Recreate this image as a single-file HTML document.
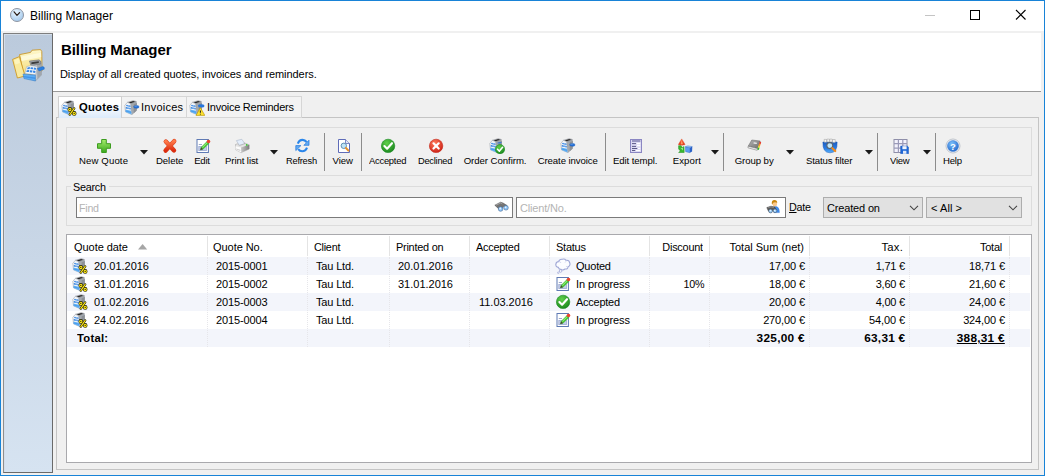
<!DOCTYPE html>
<html><head><meta charset="utf-8"><title>Billing Manager</title>
<style>
*{box-sizing:border-box;margin:0;padding:0}
html,body{width:1045px;height:476px;overflow:hidden;background:#f0f0f0}
body{position:relative;font-family:"Liberation Sans",sans-serif;font-size:11px;color:#000}
.abs{position:absolute;display:block}
.t{position:absolute;white-space:nowrap;line-height:13px;font-size:11px;font-family:"Liberation Sans",sans-serif}
</style></head>
<body>

<svg width="0" height="0" style="position:absolute">
<defs>
<linearGradient id="gGreen" x1="0" y1="0" x2="0" y2="1"><stop offset="0" stop-color="#a6ee6e"/><stop offset="1" stop-color="#3aa81c"/></linearGradient>
<linearGradient id="gRed" x1="0" y1="0" x2="0" y2="1"><stop offset="0" stop-color="#ff7a4a"/><stop offset="1" stop-color="#dc2c10"/></linearGradient>
<linearGradient id="gBlue" x1="0" y1="0" x2="0" y2="1"><stop offset="0" stop-color="#6db6f8"/><stop offset="1" stop-color="#1f74d8"/></linearGradient>
<linearGradient id="gGray" x1="0" y1="0" x2="0" y2="1"><stop offset="0" stop-color="#e6e6e6"/><stop offset="1" stop-color="#8e8e8e"/></linearGradient>
<radialGradient id="gOk" cx="0.4" cy="0.3" r="0.8"><stop offset="0" stop-color="#5fd04a"/><stop offset="1" stop-color="#14801a"/></radialGradient>
<radialGradient id="gNo" cx="0.4" cy="0.3" r="0.8"><stop offset="0" stop-color="#ff7a5a"/><stop offset="1" stop-color="#c81a10"/></radialGradient>
<radialGradient id="gHelp" cx="0.4" cy="0.3" r="0.8"><stop offset="0" stop-color="#7cc0fb"/><stop offset="1" stop-color="#1c62c8"/></radialGradient>
<radialGradient id="gClock" cx="0.4" cy="0.3" r="0.8"><stop offset="0" stop-color="#eaf6ff"/><stop offset="1" stop-color="#9cc4ea"/></radialGradient>
<linearGradient id="gFold" x1="0" y1="0" x2="0" y2="1"><stop offset="0" stop-color="#fef8cc"/><stop offset="1" stop-color="#f4da74"/></linearGradient>
<linearGradient id="gGrayD" x1="0" y1="0" x2="1" y2="0"><stop offset="0" stop-color="#c8c8c8"/><stop offset="1" stop-color="#7c7c7c"/></linearGradient>
<linearGradient id="gBook" x1="0" y1="0" x2="1" y2="1"><stop offset="0" stop-color="#b4b4b4"/><stop offset="1" stop-color="#6c6c6c"/></linearGradient>
<linearGradient id="gBlue2" x1="0" y1="0" x2="0" y2="1"><stop offset="0" stop-color="#1c5cc0"/><stop offset=".6" stop-color="#2a7ee6"/><stop offset="1" stop-color="#58b0f8"/></linearGradient>
<g id="reg">
  <path d="M6.4 3.6 L11.4 1.5 Q12.9 1.4 12.9 3 L12.7 10.6 L8.2 14.8 L7.3 14.3 Z" fill="#a4a9af"/>
  <path d="M9.6 4.2 L12.8 3 L12.7 10.6 L9.8 13.2Z" fill="#8c9197"/>
  <path d="M3.4 2.3 L9.2 0.7 L12.4 1.5 L6.6 3.7 Z" fill="#c4c8cc" stroke="#7a7f86" stroke-width=".5"/>
  <path d="M4.6 2.4 L9.2 1.1 L11.2 1.8 L6.7 3.3Z" fill="#2a2a2a"/>
  <path d="M0.8 5.3 L3.4 2.3 L6.6 3.7 L7.7 14.5 L1.5 11.9 Z" fill="#f4f6f9" stroke="#8a9098" stroke-width=".45" stroke-linejoin="round"/>
  <path d="M2.5 4.7 L6.4 5.5 L6.5 6.9 L2.1 6Z" fill="#2f80e0"/>
  <path d="M1.8 7.1 L6.6 8 L6.8 9.4 L1.7 8.4Z" fill="#2f80e0"/>
  <path d="M3.6 5.5 L5.6 5.9 M3.2 7.9 L5.6 8.4" stroke="#cfe6ff" stroke-width=".6"/>
  <path d="M1.4 9.6 L7 10.8 L7.6 14.4 L1.6 11.9Z" fill="#62b2f5"/>
  <path d="M1.5 10.6 L7.2 12 L7.3 12.8 L1.5 11.3Z" fill="#2f80e0" opacity=".55"/>
</g>
</defs></svg>

<div class="abs" style="left:0px;top:0px;width:1045px;height:476px;background:#f0f0f0;border:1px solid #1883d7"></div>
<div class="abs" style="left:1px;top:1px;width:1043px;height:30px;background:#fff"></div>
<svg class="abs" style="left:8.8px;top:6.7px" width="16" height="16" viewBox="0 0 16 16"><circle cx="8" cy="8" r="6.5" fill="url(#gClock)" stroke="#9096a2" stroke-width="1"/><path d="M5.1 4.8 L8 8.4 L10.6 5.7" fill="none" stroke="#2a1c14" stroke-width="1.2" stroke-linecap="round" stroke-linejoin="round"/></svg>
<span id="t1" class="t " style="left:30px;top:9px;font-size:12px;line-height:15px;;letter-spacing:0.020px">Billing Manager</span>
<div class="abs" style="left:925px;top:15px;width:10px;height:1px;background:#c4c4c4"></div>
<div class="abs" style="left:970px;top:10px;width:10px;height:10px;border:1px solid #000"></div>
<svg class="abs" style="left:1015px;top:9px" width="12" height="12" viewBox="0 0 12 12"><path d="M1 1 L10.5 10.5 M10.5 1 L1 10.5" stroke="#000" stroke-width="1.1" fill="none"/></svg>
<div class="abs" style="left:3px;top:33px;width:50px;height:440px;background:linear-gradient(#bbcadc,#d6e3f1);border:1px solid #6a6a6a;border-top-color:#7e7e7e;border-left-color:#8e8e8e;box-shadow:inset 1px 1px 0 #d3dde9"></div>
<svg class="abs" style="left:11.5px;top:48.5px" width="33" height="33" viewBox="0 0 33 33"><path d="M7.5 5.6 L18.6 3.4 L20 1.2 L28.6 0.6 L29.8 2.6 L30 22 L12 27.6Z" fill="url(#gFold)" stroke="#c8962a" stroke-width=".9" stroke-linejoin="round"/><path d="M9 7.4 L29 3.8 L29.2 8 L9.8 12Z" fill="#fffce6" opacity=".75"/><path d="M0.6 10.4 L7.4 7.6 L13 27 L5.4 29 Z" fill="#f9ea9e" stroke="#cf9a24" stroke-width=".9" stroke-linejoin="round"/><path d="M2.2 11.2 L6.6 9.4 L8 14 L3.6 15.6Z" fill="#fdf6c4" opacity=".8"/><path d="M19.4 12.6 L27.6 11.8 Q29.4 11.8 29.4 14 L29.4 26 L23.4 32 L20.4 30.6 Z" fill="#c3c8ce" stroke="#858b93" stroke-width=".5"/><path d="M25 16 L29.4 14.6 L29.4 26 L25.4 30Z" fill="#a0a6ad"/><path d="M17.4 12 L27 10.8 L28.6 12.2 L28.6 15 L19 16.8 Z" fill="#9a9ea4" stroke="#666" stroke-width=".5"/><path d="M19.4 13.2 L26.8 12.2 L26.8 14 L19.4 15.2Z" fill="#3c3c3c"/><path d="M14.6 17.6 L19 16.6 L25.4 17.6 L23.6 25.8 L12.8 24.6 Z" fill="#f2f5f8" stroke="#98a0a8" stroke-width=".5"/><g fill="#3486e6"><path d="M15.6 18.4l2.4-.3-.4 1.9-2.5.2z"/><path d="M18.8 18.2l2.4.2-.4 1.9-2.4-.2z"/><path d="M22 18.6l2.2.3-.4 1.9-2.2-.3z"/><path d="M14.8 21.2l2.5-.1-.4 2-2.6 0z"/><path d="M18.1 21.2l2.4.2-.4 2-2.4-.2z"/><path d="M21.3 21.6l2.2.3-.4 2-2.2-.3z"/></g><path d="M11 25 L23.4 26.2 L23.4 32 L12 29.6 Z" fill="#5eaef4" stroke="#2c78c8" stroke-width=".5"/><path d="M11.6 27 L23.4 28.6 L23.4 30 L11.8 28.2Z" fill="#2f80e0" opacity=".6"/><path d="M25.4 19.4 L30.6 17.6 Q33 17.8 32.2 20.2 L27 22Z" fill="#2b7fe0" stroke="#1a5fb8" stroke-width=".4"/></svg>
<div class="abs" style="left:53px;top:33px;width:988px;height:59px;background:#fff;border-bottom:1px solid #9a9a9a"></div>
<span id="t2" class="t " style="left:61px;top:41px;font-size:15px;line-height:17px;font-weight:bold;letter-spacing:-0.085px">Billing Manager</span>
<span id="t3" class="t " style="left:60px;top:68px;line-height:13px;letter-spacing:-0.071px">Display of all created quotes, invoices and reminders.</span>
<div class="abs" style="left:56px;top:117px;width:983px;height:353px;border:1px solid #c4c4c4;background:#f0f0f0"></div>
<div class="abs" style="left:121px;top:96px;width:66px;height:22px;border:1px solid #d6d6d6;border-left:none;background:#f3f3f3"></div>
<div class="abs" style="left:186px;top:96px;width:116px;height:22px;border:1px solid #d6d6d6;background:#f3f3f3"></div>
<div class="abs" style="left:58px;top:96px;width:64px;height:22px;border:1px solid #d0d0d0;border-bottom:none;background:linear-gradient(#ffffff 30%,#dcebfb)"></div>
<svg class="abs" style="left:61px;top:100px" width="16" height="16" viewBox="0 0 16 16"><use href="#reg"/><g stroke="#1d1d00" stroke-width="2.3" fill="none" stroke-linecap="round"><circle cx="8.8" cy="9.4" r="1.15"/><circle cx="13.2" cy="13.4" r="1.15"/><path d="M13.2 8.4 L8.8 14.6"/></g><g stroke="#ffe818" stroke-width="1.15" fill="none" stroke-linecap="round"><circle cx="8.8" cy="9.4" r="1.15"/><circle cx="13.2" cy="13.4" r="1.15"/><path d="M13.2 8.4 L8.8 14.6"/></g></svg>
<span id="t4" class="t " style="left:79px;top:101px;font-weight:bold;letter-spacing:0.250px;transform:scaleX(1.0215);transform-origin:0 0">Quotes</span>
<svg class="abs" style="left:124px;top:100px" width="16" height="16" viewBox="0 0 16 16"><use href="#reg"/><path d="M9.6 6.2 L12.4 5.4 Q15.2 5.2 15 7 Q14.8 8.5 12.6 8.3 L10 7.8Z" fill="#2470d8" stroke="#1a58b0" stroke-width=".4"/><path d="M10.6 6.4 L13.2 5.9" stroke="#7fb6f6" stroke-width=".6"/></svg>
<span id="t5" class="t " style="left:141px;top:101px;;letter-spacing:0.234px">Invoices</span>
<svg class="abs" style="left:189px;top:100px" width="16" height="16" viewBox="0 0 16 16"><use href="#reg"/><path d="M9 5 L12.2 4.2 Q15.6 4 15.4 6.2 Q15.2 7.8 12.4 7.6 L9.4 7Z" fill="#2876dc"/><path d="M11.4 7.6 L15.8 15.4 L7 15.4Z" fill="#ffe32e" stroke="#b08c00" stroke-width=".6" stroke-linejoin="round"/><path d="M11.4 10.4 V12.8 M11.4 13.7 V14.5" stroke="#222" stroke-width="1.1"/></svg>
<span id="t6" class="t " style="left:207px;top:101px;;letter-spacing:-0.250px;transform:scaleX(0.9989);transform-origin:0 0">Invoice Reminders</span>
<div class="abs" style="left:66px;top:127px;width:966px;height:49px;border:1px solid #dcdcdc;background:#f0f0f0"></div>
<svg class="abs" style="left:96px;top:138px" width="16" height="16" viewBox="0 0 16 16"><path d="M5.7 1.5h4.6v4.2h4.2v4.6h-4.2v4.2H5.7v-4.2H1.5V5.7h4.2z" fill="url(#gGreen)" stroke="#3c9c1e" stroke-width="1" stroke-linejoin="round"/></svg>
<span id="t7" class="t " style="left:79.0px;top:155px;font-size:9.6px;line-height:12px;;letter-spacing:0.125px">New Quote</span>
<svg class="abs" style="left:162px;top:138px" width="16" height="16" viewBox="0 0 16 16"><g fill="none" stroke-linecap="round"><path d="M3.8 3.6 L12 12.4 M12.2 3.2 L3.6 12.6" stroke="#d63c18" stroke-width="4.4"/><path d="M3.8 3.6 L12 12.4" stroke="url(#gRed)" stroke-width="3.5"/><path d="M12.2 3.2 L3.6 12.6" stroke="url(#gRed)" stroke-width="3.5"/></g></svg>
<span id="t8" class="t " style="left:156.0px;top:155px;font-size:9.6px;line-height:12px;;letter-spacing:-0.087px">Delete</span>
<svg class="abs" style="left:194.5px;top:138px" width="16" height="16" viewBox="0 0 16 16"><rect x="2" y="1.5" width="11.4" height="13" fill="#fff" stroke="#5f7ab4"/><path d="M3.8 6.5h3.2" stroke="#9aa8cc" stroke-width="1"/><rect x="3.8" y="8.3" width="7.8" height="4.4" fill="#c3cdea" stroke="#8d9cc8" stroke-width=".6"/><path d="M5.3 12 L6.2 9.3 L12 3.4 L14 5.4 L8 11.2 Z" fill="#4ccc38" stroke="#2f9a22" stroke-width=".4" stroke-linejoin="round"/><path d="M7.2 9.6 L12.2 4.6" stroke="#a4f08c" stroke-width=".9"/><circle cx="13.5" cy="3.5" r="1.8" fill="#e8442e"/><path d="M5.3 12 L6.2 9.3 L8 11.2Z" fill="#4a4036"/></svg>
<span id="t9" class="t " style="left:194.2px;top:155px;font-size:9.6px;line-height:12px;;letter-spacing:-0.249px">Edit</span>
<svg class="abs" style="left:235px;top:138px" width="16" height="16" viewBox="0 0 16 16"><g transform="translate(0 .8)"><path d="M1.4 1.8 L6.8 0.5 L9.8 4.8 L4.4 6.6Z" fill="#e3edfb" stroke="#a9b6c8" stroke-width=".6" stroke-linejoin="round"/><path d="M0.3 5.8 L2.4 5 L4.4 6.8 L9.8 5 L9.2 4 L14.2 6 L14.2 10.2 L6.2 13.8 L0.5 10.8Z" fill="#e4e4e4" stroke="#9a9a9a" stroke-width=".5" stroke-linejoin="round"/><path d="M6 8.8 L14.2 6 L14.2 10.2 L6.2 13.8Z" fill="url(#gGrayD)"/><path d="M0.5 7.4 L6 8.8 L6.2 13.8 L0.5 10.8Z" fill="#fbfbfb"/><path d="M1.2 9.6 L5.4 11 L5.4 12.2 L1.2 10.6Z" fill="#cfcfcf"/><circle cx="11.7" cy="6.1" r=".95" fill="#35c72c"/></g></svg>
<span id="t10" class="t " style="left:225.0px;top:155px;font-size:9.6px;line-height:12px;;letter-spacing:-0.092px">Print list</span>
<svg class="abs" style="left:294.5px;top:138px" width="16" height="16" viewBox="0 0 16 16"><path d="M2.8 5.6 Q4.2 1.9 7.6 1.9 Q10 1.9 11.6 4" fill="none" stroke="#2a86ea" stroke-width="2.1"/><path d="M14 2.2 V7.3 H8.9Z" fill="#62acf6" stroke="#1f74d8" stroke-width=".7" stroke-linejoin="round"/><path d="M12 9.6 Q10.6 13.3 7.2 13.3 Q4.8 13.3 3.2 11.2" fill="none" stroke="#2a86ea" stroke-width="2.1"/><path d="M0.8 12.6 V7.6 H5.9Z" fill="#62acf6" stroke="#1f74d8" stroke-width=".7" stroke-linejoin="round"/></svg>
<span id="t11" class="t " style="left:285.9px;top:155px;font-size:9.6px;line-height:12px;;letter-spacing:-0.250px;transform:scaleX(0.9690);transform-origin:0 0">Refresh</span>
<svg class="abs" style="left:335.5px;top:138px" width="16" height="16" viewBox="0 0 16 16"><path d="M2.5 1.5 H9.5 L13.5 5.5 V14.5 H2.5Z" fill="#fff" stroke="#5f6cb8"/><path d="M9.5 1.5 V5.5 H13.5" fill="#dfe6f6" stroke="#5f6cb8" stroke-width=".8"/><circle cx="7.8" cy="7.8" r="2.7" fill="#bfe4f6" stroke="#5f8fb4" stroke-width="1"/><path d="M10 10 L12.4 12.6" stroke="#e8902a" stroke-width="2" stroke-linecap="round"/></svg>
<span id="t12" class="t " style="left:332.5px;top:155px;font-size:9.6px;line-height:12px;;letter-spacing:-0.042px">View</span>
<svg class="abs" style="left:380px;top:138px" width="16" height="16" viewBox="0 0 16 16"><circle cx="8.1" cy="7.9" r="6.7" fill="url(#gOk)" stroke="#168a1e" stroke-width=".6"/><path d="M4.4 8.1 L7.1 10.7 L12 5.2" fill="none" stroke="#fff" stroke-width="2.1" stroke-linecap="round" stroke-linejoin="round"/></svg>
<span id="t13" class="t " style="left:368.9px;top:155px;font-size:9.6px;line-height:12px;;letter-spacing:-0.250px;transform:scaleX(0.9774);transform-origin:0 0">Accepted</span>
<svg class="abs" style="left:428px;top:138px" width="16" height="16" viewBox="0 0 16 16"><circle cx="8.1" cy="7.9" r="6.7" fill="url(#gNo)" stroke="#c42414" stroke-width=".6"/><path d="M5.5 5.3 L10.7 10.5 M10.7 5.3 L5.5 10.5" stroke="#fff" stroke-width="2.2" stroke-linecap="round"/></svg>
<span id="t14" class="t " style="left:418.1px;top:155px;font-size:9.6px;line-height:12px;;letter-spacing:-0.250px;transform:scaleX(0.9665);transform-origin:0 0">Declined</span>
<svg class="abs" style="left:488.5px;top:138px" width="16" height="16" viewBox="0 0 16 16"><use href="#reg"/><path d="M8.6 5 L12.4 4.6" stroke="#2876dc" stroke-width="1"/><circle cx="11" cy="11.2" r="4.7" fill="url(#gOk)" stroke="#168a1e" stroke-width=".5"/><path d="M8.5 11.2 L10.4 13.1 L13.6 9.3" fill="none" stroke="#fff" stroke-width="1.6" stroke-linecap="round" stroke-linejoin="round"/></svg>
<span id="t15" class="t " style="left:463.7px;top:155px;font-size:9.6px;line-height:12px;;letter-spacing:-0.049px">Order Confirm.</span>
<svg class="abs" style="left:560px;top:138px" width="16" height="16" viewBox="0 0 16 16"><use href="#reg"/><path d="M9.6 6.2 L12.4 5.4 Q15.2 5.2 15 7 Q14.8 8.5 12.6 8.3 L10 7.8Z" fill="#2470d8" stroke="#1a58b0" stroke-width=".4"/><path d="M10.6 6.4 L13.2 5.9" stroke="#7fb6f6" stroke-width=".6"/></svg>
<span id="t16" class="t " style="left:537.7px;top:155px;font-size:9.6px;line-height:12px;;letter-spacing:-0.094px">Create invoice</span>
<svg class="abs" style="left:628px;top:138px" width="16" height="16" viewBox="0 0 16 16"><rect x="2.5" y="1.5" width="11" height="13" fill="#dcdaf3" stroke="#8a86c2"/><path d="M4 3h8.4" stroke="#6c6aa0" stroke-width="1.2"/><path d="M4 5.6h4M4 8.4h4M4 10.5h5.2M4 12.5h3.2" stroke="#5c5a88" stroke-width="1"/><path d="M8.8 5.6h3.4M9 7.6h3.2M10 10.5h2.2M8 12.5h4.2" stroke="#fff" stroke-width="1.2"/></svg>
<span id="t17" class="t " style="left:613.0px;top:155px;font-size:9.6px;line-height:12px;;letter-spacing:-0.093px">Edit templ.</span>
<svg class="abs" style="left:678px;top:138px" width="16" height="16" viewBox="0 0 16 16"><path d="M3.7 0.9 L7.1 6.6 Q3.7 8 0.3 6.6Z" fill="url(#gRed)" stroke="#d8401c" stroke-width=".4" stroke-linejoin="round"/><path d="M3.6 2.2 L5 6.2 L2.6 6.4Z" fill="#ffb07a" opacity=".8"/><path d="M0.6 7.7 L3 7.7 L4.6 9.7 L6 8.4 L6.2 14.5 L0.6 14.5 L2.3 12.9 L0.6 10.9Z" fill="#37b82e" stroke="#1f8e1c" stroke-width=".5" stroke-linejoin="round"/><path d="M2.6 10 L5 12.6 L5 10Z" fill="#9be88a"/><path d="M7.4 8.7 L12 9.5 L11.8 14.7 L7.6 13.7Z" fill="#5a9cf0" stroke="#2a62c0" stroke-width=".4"/><path d="M12 9.5 L14.3 8.6 L14.1 13.4 L11.8 14.7Z" fill="#2a62c8"/><path d="M7.4 8.7 L9.8 7.7 L14.3 8.6 L12 9.5Z" fill="#9cc6fa" stroke="#2a62c0" stroke-width=".3"/></svg>
<span id="t18" class="t " style="left:672.7px;top:155px;font-size:9.6px;line-height:12px;;letter-spacing:0.113px">Export</span>
<svg class="abs" style="left:747px;top:138px" width="16" height="16" viewBox="0 0 16 16"><path d="M4.8 2 L13.2 3 L10.4 10.6 L1.2 8.2Z" fill="url(#gBook)" stroke="#5e5e5e" stroke-width=".5" stroke-linejoin="round"/><path d="M1.2 8.2 L10.4 10.6 L10.2 12.3 L0.9 9.8Z" fill="#f2f2f2" stroke="#6a6a6a" stroke-width=".5" stroke-linejoin="round"/><path d="M6.8 4.2 L10 4.7 L9.6 6 L6.4 5.5Z" fill="#f0f0f0"/><path d="M12.8 3.6 L14.2 4.2 L13.6 6.2 L12.1 5.8Z" fill="#e8392a"/><path d="M12.1 5.8 L13.6 6.2 L13 8.1 L11.5 7.7Z" fill="#f59a1c"/><path d="M11.5 7.7 L13 8.1 L12.4 10 L10.9 9.6Z" fill="#f0d820"/><path d="M10.9 9.6 L12.4 10 L11.8 12 L10.3 11.6Z" fill="#2fb52a"/></svg>
<span id="t19" class="t " style="left:734.7px;top:155px;font-size:9.6px;line-height:12px;;letter-spacing:-0.067px">Group by</span>
<svg class="abs" style="left:821.5px;top:138px" width="16" height="16" viewBox="0 0 16 16"><path d="M0.9 4 Q0.4 14.8 8 14.8 Q15.6 14.8 15.1 4Z" fill="url(#gBlue2)" stroke="#1a58b8" stroke-width=".5"/><path d="M2.2 1.4h2.4v2.8H2.2zM5 1.1h2.4v2.8H5zM7.8 1.1h2.4v2.8H7.8zM10.6 1.5h2.6v3h-2.6z" fill="#f8f8f8" stroke="#9a9a9a" stroke-width=".5"/><circle cx="7.8" cy="7.6" r="3" fill="#bfe6fa" stroke="#5a6470" stroke-width="1.1"/><path d="M10.4 10.2 L13.2 13" stroke="#f08a1e" stroke-width="2.3" stroke-linecap="round"/></svg>
<span id="t20" class="t " style="left:806.0px;top:155px;font-size:9.6px;line-height:12px;;letter-spacing:-0.133px">Status filter</span>
<svg class="abs" style="left:892.5px;top:138px" width="16" height="16" viewBox="0 0 16 16"><rect x="1" y="1.5" width="13" height="13" fill="#f3f2fc" stroke="#8e8ea8"/><path d="M1 5.7H14M1 10.1H14M5.4 1.5V14.5M9.8 1.5V14.5" stroke="#9a9ab8" stroke-width="1.2"/><path d="M7.6 8 H14.2 L15.6 9.2 V15.8 H7.6Z" fill="#1f68d8" stroke="#164fb0" stroke-width=".4"/><rect x="9.4" y="8.2" width="4.2" height="3" fill="#f0f4fb"/><rect x="10" y="12.8" width="3.4" height="3" fill="#dfe8f8"/></svg>
<span id="t21" class="t " style="left:889.7px;top:155px;font-size:9.6px;line-height:12px;;letter-spacing:-0.250px;transform:scaleX(0.9862);transform-origin:0 0">View</span>
<svg class="abs" style="left:945px;top:138px" width="16" height="16" viewBox="0 0 16 16"><circle cx="8" cy="8" r="7" fill="#f4f6f9" stroke="#a9b0ba" stroke-width=".7"/><circle cx="8" cy="8" r="5.6" fill="url(#gHelp)" stroke="#2a6cc8" stroke-width=".4"/><text x="8" y="11.5" font-family="Liberation Sans,sans-serif" font-weight="bold" font-size="9.5" fill="#fff" text-anchor="middle">?</text></svg>
<span id="t22" class="t " style="left:943.0px;top:155px;font-size:9.6px;line-height:12px;;letter-spacing:-0.245px">Help</span>
<svg class="abs" style="left:140px;top:150px" width="8" height="5" viewBox="0 0 8 5"><path d="M0 0H8L4 4.5Z" fill="#1a1a1a"/></svg>
<svg class="abs" style="left:270px;top:150px" width="8" height="5" viewBox="0 0 8 5"><path d="M0 0H8L4 4.5Z" fill="#1a1a1a"/></svg>
<svg class="abs" style="left:711px;top:150px" width="8" height="5" viewBox="0 0 8 5"><path d="M0 0H8L4 4.5Z" fill="#1a1a1a"/></svg>
<svg class="abs" style="left:786px;top:150px" width="8" height="5" viewBox="0 0 8 5"><path d="M0 0H8L4 4.5Z" fill="#1a1a1a"/></svg>
<svg class="abs" style="left:865px;top:150px" width="8" height="5" viewBox="0 0 8 5"><path d="M0 0H8L4 4.5Z" fill="#1a1a1a"/></svg>
<svg class="abs" style="left:923px;top:150px" width="8" height="5" viewBox="0 0 8 5"><path d="M0 0H8L4 4.5Z" fill="#1a1a1a"/></svg>
<div class="abs" style="left:324px;top:133px;width:1px;height:38px;background:#8c8c8c"></div>
<div class="abs" style="left:361px;top:133px;width:1px;height:38px;background:#8c8c8c"></div>
<div class="abs" style="left:605px;top:133px;width:1px;height:38px;background:#8c8c8c"></div>
<div class="abs" style="left:723px;top:133px;width:1px;height:38px;background:#8c8c8c"></div>
<div class="abs" style="left:877px;top:133px;width:1px;height:38px;background:#8c8c8c"></div>
<div class="abs" style="left:935px;top:133px;width:1px;height:38px;background:#8c8c8c"></div>
<div class="abs" style="left:66px;top:186px;width:966px;height:40px;border:1px solid #dcdcdc"></div>
<div class="abs" style="left:71px;top:181px;width:38px;height:13px;background:#f0f0f0"></div>
<span id="t23" class="t " style="left:73px;top:181px;;letter-spacing:-0.250px;transform:scaleX(0.9819);transform-origin:0 0">Search</span>
<div class="abs" style="left:76px;top:197px;width:437px;height:21px;background:#fff;border:1px solid #7a7a7a"></div>
<span id="t24" class="t " style="left:79px;top:202px;color:#b4b4b4;letter-spacing:-0.250px;transform:scaleX(0.9682);transform-origin:0 0">Find</span>
<svg class="abs" style="left:494px;top:200px" width="16" height="16" viewBox="0 0 16 16"><path d="M0.8 5.2 L6.6 2.2 L9 3 L13 5.4 L12.4 7 L9.4 6.6 L7 9.8 L4 8.2Z" fill="#747474" stroke="#4a4a4a" stroke-width=".5" stroke-linejoin="round"/><path d="M2 5.2 L6.6 3 L8.4 3.8" stroke="#b4b4b4" stroke-width=".7" fill="none"/><circle cx="6.6" cy="9" r="2.3" fill="#8cc4f8" stroke="#4a6c94" stroke-width=".6"/><circle cx="12" cy="7.8" r="2.3" fill="#8cc4f8" stroke="#4a6c94" stroke-width=".6"/><circle cx="6.2" cy="8.5" r=".9" fill="#e8f4ff"/><circle cx="11.6" cy="7.3" r=".9" fill="#e8f4ff"/></svg>
<div class="abs" style="left:516px;top:197px;width:270px;height:21px;background:#fff;border:1px solid #7a7a7a"></div>
<span id="t25" class="t " style="left:520px;top:202px;color:#b4b4b4;letter-spacing:-0.177px">Client/No.</span>
<svg class="abs" style="left:766px;top:199px" width="16" height="16" viewBox="0 0 16 16"><path d="M8 7.4 Q13.4 6.6 13.4 13.6 L8 13.6Z" fill="#3c8cf0" stroke="#2a6cd0" stroke-width=".4"/><ellipse cx="8.8" cy="5" rx="2.3" ry="2.6" fill="#fbc98c"/><path d="M5.8 5 Q5.4 1 8.4 1 Q11.4 1 11.2 4 Q9.6 2.8 7.6 3.6 Q6.6 4 6.6 5.4Z" fill="#c8860e"/><path d="M0.8 8.6 L5 7.2 L8.6 8 L10.6 11 L9 13 L6.6 11.4 L4.4 13.4 L2.4 12Z" fill="#5a5a5a" stroke="#3c3c3c" stroke-width=".5" stroke-linejoin="round"/><path d="M1.8 8.8 L5 7.9 L7.8 8.6" stroke="#a8a8a8" stroke-width=".6" fill="none"/><circle cx="4.6" cy="12" r="1.9" fill="#9cd0fa" stroke="#44546a" stroke-width=".6"/><circle cx="9" cy="11.8" r="1.9" fill="#9cd0fa" stroke="#44546a" stroke-width=".6"/><circle cx="4.3" cy="11.6" r=".7" fill="#f0f8ff"/><circle cx="8.7" cy="11.4" r=".7" fill="#f0f8ff"/></svg>
<span id="t26" class="t " style="left:789px;top:201px;;letter-spacing:-0.250px;transform:scaleX(0.9778);transform-origin:0 0"><u>D</u>ate</span>
<div class="abs" style="left:823px;top:197px;width:100px;height:21px;background:#e1e1e1;border:1px solid #adadad"></div>
<span id="t27" class="t " style="left:827px;top:202px;;letter-spacing:-0.160px">Created on</span>
<div class="abs" style="left:926px;top:197px;width:96px;height:21px;background:#e1e1e1;border:1px solid #adadad"></div>
<span id="t28" class="t " style="left:931px;top:202px;;letter-spacing:0.070px">&lt; All &gt;</span>
<svg class="abs" style="left:909px;top:204px" width="10" height="8" viewBox="0 0 10 8"><path d="M1 1.8 L5 5.8 L9 1.8" fill="none" stroke="#444" stroke-width="1.1"/></svg>
<svg class="abs" style="left:1008px;top:204px" width="10" height="8" viewBox="0 0 10 8"><path d="M1 1.8 L5 5.8 L9 1.8" fill="none" stroke="#444" stroke-width="1.1"/></svg>
<div class="abs" style="left:66px;top:234px;width:966px;height:229px;background:#fff;border:1px solid #a9a9ad"></div>
<div class="abs" style="left:67px;top:257px;width:963px;height:18px;background:#f3f5fb"></div>
<div class="abs" style="left:67px;top:293px;width:963px;height:18px;background:#f3f5fb"></div>
<div class="abs" style="left:67px;top:329px;width:963px;height:18px;background:#f3f5fb"></div>
<div class="abs" style="left:207px;top:236px;width:1px;height:20px;background:#e4e4e4"></div>
<div class="abs" style="left:207px;top:257px;width:1px;height:90px;border-left:1px dotted #e6e6ea"></div>
<div class="abs" style="left:307px;top:236px;width:1px;height:20px;background:#e4e4e4"></div>
<div class="abs" style="left:307px;top:257px;width:1px;height:90px;border-left:1px dotted #e6e6ea"></div>
<div class="abs" style="left:389px;top:236px;width:1px;height:20px;background:#e4e4e4"></div>
<div class="abs" style="left:389px;top:257px;width:1px;height:90px;border-left:1px dotted #e6e6ea"></div>
<div class="abs" style="left:469px;top:236px;width:1px;height:20px;background:#e4e4e4"></div>
<div class="abs" style="left:469px;top:257px;width:1px;height:90px;border-left:1px dotted #e6e6ea"></div>
<div class="abs" style="left:549px;top:236px;width:1px;height:20px;background:#e4e4e4"></div>
<div class="abs" style="left:549px;top:257px;width:1px;height:90px;border-left:1px dotted #e6e6ea"></div>
<div class="abs" style="left:649px;top:236px;width:1px;height:20px;background:#e4e4e4"></div>
<div class="abs" style="left:649px;top:257px;width:1px;height:90px;border-left:1px dotted #e6e6ea"></div>
<div class="abs" style="left:709px;top:236px;width:1px;height:20px;background:#e4e4e4"></div>
<div class="abs" style="left:709px;top:257px;width:1px;height:90px;border-left:1px dotted #e6e6ea"></div>
<div class="abs" style="left:809px;top:236px;width:1px;height:20px;background:#e4e4e4"></div>
<div class="abs" style="left:809px;top:257px;width:1px;height:90px;border-left:1px dotted #e6e6ea"></div>
<div class="abs" style="left:909px;top:236px;width:1px;height:20px;background:#e4e4e4"></div>
<div class="abs" style="left:909px;top:257px;width:1px;height:90px;border-left:1px dotted #e6e6ea"></div>
<div class="abs" style="left:1009px;top:236px;width:1px;height:20px;background:#e4e4e4"></div>
<div class="abs" style="left:1009px;top:257px;width:1px;height:90px;border-left:1px dotted #e6e6ea"></div>
<span id="t29" class="t " style="left:74px;top:241px;;letter-spacing:-0.049px">Quote date</span>
<span id="t30" class="t " style="left:213px;top:241px;;letter-spacing:-0.055px">Quote No.</span>
<span id="t31" class="t " style="left:314px;top:241px;;letter-spacing:-0.250px;transform:scaleX(0.9823);transform-origin:0 0">Client</span>
<span id="t32" class="t " style="left:396px;top:241px;;letter-spacing:-0.250px;transform:scaleX(0.9936);transform-origin:0 0">Printed on</span>
<span id="t33" class="t " style="left:476px;top:241px;;letter-spacing:-0.250px;transform:scaleX(0.9904);transform-origin:0 0">Accepted</span>
<span id="t34" class="t " style="left:556px;top:241px;;letter-spacing:-0.237px">Status</span>
<span id="t35" class="t " style="right:342px;top:241px;;letter-spacing:-0.250px;transform:scaleX(0.9915);transform-origin:100% 0">Discount</span>
<span id="t36" class="t " style="right:241px;top:241px;;letter-spacing:-0.007px">Total Sum (net)</span>
<span id="t37" class="t " style="right:142px;top:241px;;letter-spacing:0.250px;transform:scaleX(1.0269);transform-origin:100% 0">Tax.</span>
<span id="t38" class="t " style="right:43px;top:241px;;letter-spacing:-0.238px">Total</span>
<svg class="abs" style="left:138px;top:244px" width="10" height="6" viewBox="0 0 10 6"><path d="M0 5.4 L4.6 0 L9.2 5.4Z" fill="#a6a6a6"/></svg>
<svg class="abs" style="left:72px;top:258px" width="16" height="16" viewBox="0 0 16 16"><use href="#reg"/><g stroke="#1d1d00" stroke-width="2.3" fill="none" stroke-linecap="round"><circle cx="8.8" cy="9.4" r="1.15"/><circle cx="13.2" cy="13.4" r="1.15"/><path d="M13.2 8.4 L8.8 14.6"/></g><g stroke="#ffe818" stroke-width="1.15" fill="none" stroke-linecap="round"><circle cx="8.8" cy="9.4" r="1.15"/><circle cx="13.2" cy="13.4" r="1.15"/><path d="M13.2 8.4 L8.8 14.6"/></g></svg>
<span id="t39" class="t " style="left:94px;top:260px;;letter-spacing:-0.007px">20.01.2016</span>
<span id="t40" class="t " style="left:216px;top:260px;;letter-spacing:-0.114px">2015-0001</span>
<span id="t41" class="t " style="left:316px;top:260px;;letter-spacing:-0.163px">Tau Ltd.</span>
<span id="t42" class="t " style="left:398px;top:260px;;letter-spacing:-0.007px">20.01.2016</span>
<svg class="abs" style="left:554.5px;top:258px" width="16" height="16" viewBox="0 0 16 16"><path d="M3.4 9.4 Q0.5 9 0.9 6.2 Q1 3.8 3.6 3.6 Q4.4 1 7.4 1.3 Q9.6 0.5 11 2.3 Q14.2 1.8 14.7 4.8 Q15.8 7.6 13 9 Q12.8 11.4 10 11 Q8 12.8 5.8 11.3 Q3.8 11.6 3.4 9.4Z" fill="#fbfcff" stroke="#9fa7d6" stroke-width="1.1" stroke-linejoin="round"/><path d="M3.6 3.6 Q5.4 3.4 6 5 M11 2.3 Q11.2 3.8 10 4.6 M13 9 Q11.6 9.2 11 8" fill="none" stroke="#c3c8e8" stroke-width=".7"/><circle cx="5.6" cy="13" r="1.3" fill="#fbfcff" stroke="#9fa7d6" stroke-width=".8"/><circle cx="3.3" cy="14.7" r=".8" fill="#fbfcff" stroke="#9fa7d6" stroke-width=".7"/></svg>
<span id="t43" class="t " style="left:576px;top:260px;;letter-spacing:-0.219px">Quoted</span>
<span id="t44" class="t " style="right:240px;top:260px;;letter-spacing:-0.117px">17,00 €</span>
<span id="t45" class="t " style="right:140px;top:260px;;letter-spacing:-0.219px">1,71 €</span>
<span id="t46" class="t " style="right:40px;top:260px;;letter-spacing:-0.117px">18,71 €</span>
<svg class="abs" style="left:72px;top:276px" width="16" height="16" viewBox="0 0 16 16"><use href="#reg"/><g stroke="#1d1d00" stroke-width="2.3" fill="none" stroke-linecap="round"><circle cx="8.8" cy="9.4" r="1.15"/><circle cx="13.2" cy="13.4" r="1.15"/><path d="M13.2 8.4 L8.8 14.6"/></g><g stroke="#ffe818" stroke-width="1.15" fill="none" stroke-linecap="round"><circle cx="8.8" cy="9.4" r="1.15"/><circle cx="13.2" cy="13.4" r="1.15"/><path d="M13.2 8.4 L8.8 14.6"/></g></svg>
<span id="t47" class="t " style="left:94px;top:278px;;letter-spacing:-0.007px">31.01.2016</span>
<span id="t48" class="t " style="left:216px;top:278px;;letter-spacing:-0.114px">2015-0002</span>
<span id="t49" class="t " style="left:316px;top:278px;;letter-spacing:-0.163px">Tau Ltd.</span>
<span id="t50" class="t " style="left:398px;top:278px;;letter-spacing:-0.007px">31.01.2016</span>
<svg class="abs" style="left:554.5px;top:276px" width="16" height="16" viewBox="0 0 16 16"><rect x="2" y="1.5" width="11.4" height="13" fill="#fff" stroke="#5f7ab4"/><path d="M3.8 6.5h3.2" stroke="#9aa8cc" stroke-width="1"/><rect x="3.8" y="8.3" width="7.8" height="4.4" fill="#c3cdea" stroke="#8d9cc8" stroke-width=".6"/><path d="M5.3 12 L6.2 9.3 L12 3.4 L14 5.4 L8 11.2 Z" fill="#4ccc38" stroke="#2f9a22" stroke-width=".4" stroke-linejoin="round"/><path d="M7.2 9.6 L12.2 4.6" stroke="#a4f08c" stroke-width=".9"/><circle cx="13.5" cy="3.5" r="1.8" fill="#e8442e"/><path d="M5.3 12 L6.2 9.3 L8 11.2Z" fill="#4a4036"/></svg>
<span id="t51" class="t " style="left:576px;top:278px;;letter-spacing:-0.103px">In progress</span>
<span id="t52" class="t " style="right:341px;top:278px;;letter-spacing:-0.250px;transform:scaleX(0.9753);transform-origin:100% 0">10%</span>
<span id="t53" class="t " style="right:240px;top:278px;;letter-spacing:-0.117px">18,00 €</span>
<span id="t54" class="t " style="right:140px;top:278px;;letter-spacing:-0.219px">3,60 €</span>
<span id="t55" class="t " style="right:40px;top:278px;;letter-spacing:-0.117px">21,60 €</span>
<svg class="abs" style="left:72px;top:294px" width="16" height="16" viewBox="0 0 16 16"><use href="#reg"/><g stroke="#1d1d00" stroke-width="2.3" fill="none" stroke-linecap="round"><circle cx="8.8" cy="9.4" r="1.15"/><circle cx="13.2" cy="13.4" r="1.15"/><path d="M13.2 8.4 L8.8 14.6"/></g><g stroke="#ffe818" stroke-width="1.15" fill="none" stroke-linecap="round"><circle cx="8.8" cy="9.4" r="1.15"/><circle cx="13.2" cy="13.4" r="1.15"/><path d="M13.2 8.4 L8.8 14.6"/></g></svg>
<span id="t56" class="t " style="left:94px;top:296px;;letter-spacing:-0.007px">01.02.2016</span>
<span id="t57" class="t " style="left:216px;top:296px;;letter-spacing:-0.114px">2015-0003</span>
<span id="t58" class="t " style="left:316px;top:296px;;letter-spacing:-0.163px">Tau Ltd.</span>
<span id="t59" class="t " style="left:479px;top:296px;;letter-spacing:-0.028px">11.03.2016</span>
<svg class="abs" style="left:554.5px;top:294px" width="16" height="16" viewBox="0 0 16 16"><circle cx="8.1" cy="7.9" r="6.7" fill="url(#gOk)" stroke="#168a1e" stroke-width=".6"/><path d="M4.4 8.1 L7.1 10.7 L12 5.2" fill="none" stroke="#fff" stroke-width="2.1" stroke-linecap="round" stroke-linejoin="round"/></svg>
<span id="t60" class="t " style="left:576px;top:296px;;letter-spacing:-0.250px;transform:scaleX(0.9972);transform-origin:0 0">Accepted</span>
<span id="t61" class="t " style="right:240px;top:296px;;letter-spacing:-0.117px">20,00 €</span>
<span id="t62" class="t " style="right:140px;top:296px;;letter-spacing:-0.219px">4,00 €</span>
<span id="t63" class="t " style="right:40px;top:296px;;letter-spacing:-0.117px">24,00 €</span>
<svg class="abs" style="left:72px;top:312px" width="16" height="16" viewBox="0 0 16 16"><use href="#reg"/><g stroke="#1d1d00" stroke-width="2.3" fill="none" stroke-linecap="round"><circle cx="8.8" cy="9.4" r="1.15"/><circle cx="13.2" cy="13.4" r="1.15"/><path d="M13.2 8.4 L8.8 14.6"/></g><g stroke="#ffe818" stroke-width="1.15" fill="none" stroke-linecap="round"><circle cx="8.8" cy="9.4" r="1.15"/><circle cx="13.2" cy="13.4" r="1.15"/><path d="M13.2 8.4 L8.8 14.6"/></g></svg>
<span id="t64" class="t " style="left:94px;top:314px;;letter-spacing:-0.007px">24.02.2016</span>
<span id="t65" class="t " style="left:216px;top:314px;;letter-spacing:-0.114px">2015-0004</span>
<span id="t66" class="t " style="left:316px;top:314px;;letter-spacing:-0.163px">Tau Ltd.</span>
<svg class="abs" style="left:554.5px;top:312px" width="16" height="16" viewBox="0 0 16 16"><rect x="2" y="1.5" width="11.4" height="13" fill="#fff" stroke="#5f7ab4"/><path d="M3.8 6.5h3.2" stroke="#9aa8cc" stroke-width="1"/><rect x="3.8" y="8.3" width="7.8" height="4.4" fill="#c3cdea" stroke="#8d9cc8" stroke-width=".6"/><path d="M5.3 12 L6.2 9.3 L12 3.4 L14 5.4 L8 11.2 Z" fill="#4ccc38" stroke="#2f9a22" stroke-width=".4" stroke-linejoin="round"/><path d="M7.2 9.6 L12.2 4.6" stroke="#a4f08c" stroke-width=".9"/><circle cx="13.5" cy="3.5" r="1.8" fill="#e8442e"/><path d="M5.3 12 L6.2 9.3 L8 11.2Z" fill="#4a4036"/></svg>
<span id="t67" class="t " style="left:576px;top:314px;;letter-spacing:-0.103px">In progress</span>
<span id="t68" class="t " style="right:240px;top:314px;;letter-spacing:-0.118px">270,00 €</span>
<span id="t69" class="t " style="right:140px;top:314px;;letter-spacing:-0.117px">54,00 €</span>
<span id="t70" class="t " style="right:40px;top:314px;;letter-spacing:-0.118px">324,00 €</span>
<span id="t71" class="t " style="left:77px;top:332px;font-weight:bold;letter-spacing:0.250px;transform:scaleX(1.0206);transform-origin:0 0">Total:</span>
<span id="t72" class="t " style="right:240px;top:332px;font-weight:bold;letter-spacing:0.250px;transform:scaleX(1.0768);transform-origin:100% 0">325,00 €</span>
<span id="t73" class="t " style="right:140px;top:332px;font-weight:bold;letter-spacing:0.250px;transform:scaleX(1.0732);transform-origin:100% 0">63,31 €</span>
<span id="t74" class="t " style="right:40px;top:332px;font-weight:bold;text-decoration:underline;letter-spacing:0.250px;transform:scaleX(1.0723);transform-origin:100% 0">388,31 €</span>
</body></html>
